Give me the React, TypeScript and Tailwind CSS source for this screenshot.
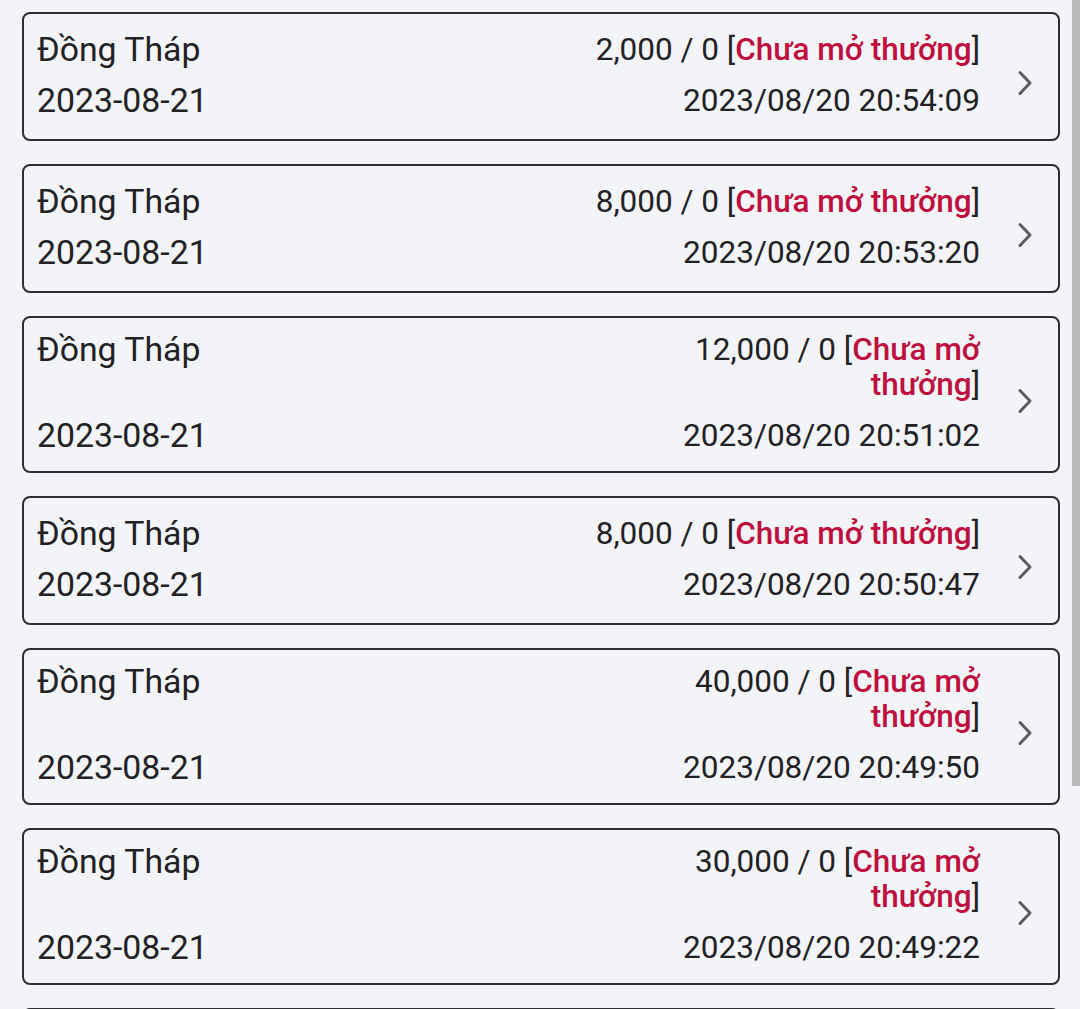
import React from 'react';

interface Ticket {
  province: string;
  drawDate: string;
  amount: string;
  won: string;
  createdAt: string;
}

const tickets: Ticket[] = [
  { province: 'Đồng Tháp', drawDate: '2023-08-21', amount: '2,000', won: '0', createdAt: '2023/08/20 20:54:09' },
  { province: 'Đồng Tháp', drawDate: '2023-08-21', amount: '8,000', won: '0', createdAt: '2023/08/20 20:53:20' },
  { province: 'Đồng Tháp', drawDate: '2023-08-21', amount: '12,000', won: '0', createdAt: '2023/08/20 20:51:02' },
  { province: 'Đồng Tháp', drawDate: '2023-08-21', amount: '8,000', won: '0', createdAt: '2023/08/20 20:50:47' },
  { province: 'Đồng Tháp', drawDate: '2023-08-21', amount: '40,000', won: '0', createdAt: '2023/08/20 20:49:50' },
  { province: 'Đồng Tháp', drawDate: '2023-08-21', amount: '30,000', won: '0', createdAt: '2023/08/20 20:49:22' },
  { province: 'Đồng Tháp', drawDate: '2023-08-21', amount: '20,000', won: '0', createdAt: '2023/08/20 20:48:10' },
];

const Chevron = () => (
  <svg width="16" height="28" viewBox="0 0 16 28" fill="none">
    <path d="M3 3.5 L13 14 L3 24.5" stroke="#5c5c60" strokeWidth="3" strokeLinecap="round" strokeLinejoin="round" />
  </svg>
);

const TicketCard = ({ t }: { t: Ticket }) => (
  <div className="flex items-center min-h-[129px] border-2 border-[#2d2d31] rounded-[8px] pl-[13px] py-[14px] cursor-pointer">
    <div className="flex-1 flex flex-col gap-[13px]">
      <div className="flex justify-between items-start">
        <span className="text-[33.8px] leading-[35px]">{t.province}</span>
        <span className="max-w-[392px] text-right text-[31.5px] leading-[35px]">
          {t.amount} / {t.won} [<span className="font-medium text-[#bf0f3e]">Chưa mở thưởng</span>]
        </span>
      </div>
      <div className="flex justify-between items-start h-[42px]">
        <span className="text-[33.8px] leading-[42px]">{t.drawDate}</span>
        <span className="text-[31.5px] leading-[42px]">{t.createdAt}</span>
      </div>
    </div>
    <div className="w-[78px] shrink-0 self-stretch flex items-center pl-[37px] pt-[12px]">
      <Chevron />
    </div>
  </div>
);

export default function App() {
  return (
    <div
      className="relative h-[1009px] overflow-hidden bg-[#f3f4f8] text-[#222225]"
      style={{ fontFamily: 'Roboto, "Noto Sans", sans-serif' }}
    >
      <div className="flex flex-col gap-[23px] pt-[12px] pl-[22px] pr-[20px]">
        {tickets.map((t, i) => (
          <TicketCard key={i} t={t} />
        ))}
      </div>
      {/* overlay scrollbar */}
      <div className="absolute top-0 right-0 w-[8px] h-[786px] bg-[#bababa]" />
    </div>
  );
}
